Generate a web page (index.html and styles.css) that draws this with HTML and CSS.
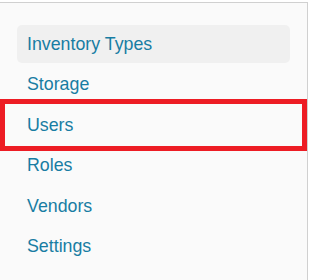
FILE: index.html
```html
<!DOCTYPE html>
<html>
<head>
<meta charset="utf-8">
<link rel="stylesheet" href="styles.css">
</head>
<body>
<aside class="sidebar">
  <nav class="menu">
    <a class="item active">Inventory Types</a>
    <a class="item">Storage</a>
    <a class="item">Users</a>
    <a class="item">Roles</a>
    <a class="item">Vendors</a>
    <a class="item">Settings</a>
  </nav>
  <div class="highlight"></div>
</aside>
</body>
</html>
```
FILE: styles.css
```css
html, body {
  margin: 0;
  padding: 0;
  background: #ffffff;
}
body {
  padding-top: 2px;
  font-family: "Liberation Sans", Arial, sans-serif;
}
.sidebar {
  position: relative;
  box-sizing: border-box;
  width: 308px;
  height: 278px;
  background: #fafafa;
  border-top: 1px solid #d0d0d0;
  border-right: 1px solid #d0d0d0;
  padding: 22px 17px 0 17px;
}
.menu {
  display: flex;
  flex-direction: column;
  gap: 2.4px;
}
.item {
  display: block;
  padding: 8px 10px;
  line-height: 22px;
  font-size: 17.8px;
  color: #187da3;
  border-radius: 5px;
  text-decoration: none;
}
.item.active {
  background: #f0f0f0;
}
.highlight {
  position: absolute;
  left: 0;
  top: 96px;
  width: 307px;
  height: 52px;
  box-sizing: border-box;
  border: 5px solid #ed1c24;
}
```
